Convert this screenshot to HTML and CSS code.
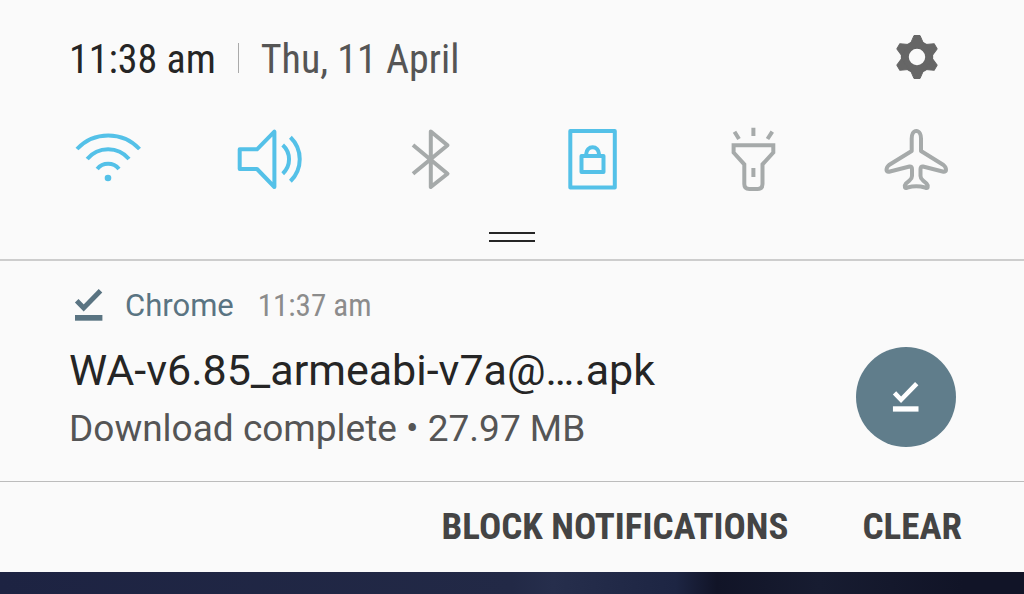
FILE: index.html
```html
<!DOCTYPE html>
<html lang="en">
<head>
<meta charset="utf-8">
<meta name="viewport" content="width=device-width, initial-scale=1">
<title>Notifications</title>
<link rel="stylesheet" href="styles.css">
</head>
<body>
<svg class="defs" aria-hidden="true">
  <symbol id="done" viewBox="0 0 30 33">
    <path d="M2.7 12.7 9.7 20 26.5 2.8" fill="none" stroke="currentColor" stroke-width="5"/>
    <path d="M1 27h27.4v5.7H1z" fill="currentColor"/>
  </symbol>
</svg>
<main class="shade">
  <section class="quick">
    <header class="status">
      <time class="clock">11:38 am</time>
      <span class="divider"></span>
      <time class="date">Thu, 11 April</time>
      <button class="icon-button settings" type="button" aria-label="Settings">
        <svg class="gear" viewBox="-23 -23 46 46">
          <circle r="12.2" fill="none" stroke="currentColor" stroke-width="8"/>
          <g fill="currentColor" stroke="currentColor" stroke-linejoin="round">
            <path id="tooth" d="M-3-21.5H3L6.500-13.500H-6.500z"/>
            <use href="#tooth" transform="rotate(60)"/>
            <use href="#tooth" transform="rotate(120)"/>
            <use href="#tooth" transform="rotate(180)"/>
            <use href="#tooth" transform="rotate(240)"/>
            <use href="#tooth" transform="rotate(300)"/>
          </g>
        </svg>
      </button>
    </header>
    <div class="toggles">
      <button class="icon-button on" type="button" aria-label="Wi-Fi" aria-pressed="true">
        <svg class="glyph" viewBox="0 0 70 70"><path d="M4 25A42.800 42.800 0 0 1 66.500 25M14.200 35A27.200 27.200 0 0 1 56 35M24.200 45A14 14 0 0 1 46 45"/><circle class="solid" cx="35" cy="54" r="3.3"/></svg>
      </button>
      <button class="icon-button on" type="button" aria-label="Sound" aria-pressed="true">
        <svg class="glyph" viewBox="0 0 70 70"><path d="M4.700 25.300H22L39.400 7.700V63L22 45H4.700zM47.700 21A19.400 19.400 0 0 1 47.700 49.700M55.400 13.300A30.600 30.600 0 0 1 55.400 57.300"/></svg>
      </button>
      <button class="icon-button" type="button" aria-label="Bluetooth" aria-pressed="false">
        <svg class="glyph" viewBox="0 0 70 70"><path d="M17 21 51.500 49.700 34.800 63V7.500L51.500 21.300 17 49.700"/></svg>
      </button>
      <button class="icon-button on" type="button" aria-label="Portrait lock" aria-pressed="true">
        <svg class="glyph" viewBox="0 0 70 70"><path d="M12.300 7H56.800V63.600H12.300zM23.500 32H45.500V48H23.500zM28.300 32V29.500a6.300 6.300 0 0 1 12.600 0V32"/></svg>
      </button>
      <button class="icon-button" type="button" aria-label="Torch" aria-pressed="false">
        <svg class="glyph" viewBox="0 0 70 70"><path class="sharp" d="M14.600 21.300H54.300V28.500L43.500 40.300V60q0 5-5 5H30.300q-5 0-5-5V40.300L14.600 28.500zM34.400 44V53M34.400 3.700V12M15.500 7.700 20 15M53.300 7.700 48.500 15"/></svg>
      </button>
      <button class="icon-button" type="button" aria-label="Flight mode" aria-pressed="false">
        <svg class="glyph" viewBox="0 0 70 70"><path d="M35.300 7C32 7 30.700 11 30.700 14.500V27L8 41Q5.500 43 5.500 46 5.800 48 8 47.700L28.500 42.500Q31 42.200 31 45V52Q31 54.500 28.500 56.500L25 59.500Q23.500 61 24 63.500 24.300 64.300 26.500 63.500 35.300 61 44 63.500 46.300 64.300 46.600 63.500 47 61 45.500 59.500L42 56.500Q39.500 54.500 39.500 52V45Q39.600 42.200 42 42.500L62.500 47.700Q64.800 48 65 46 65.100 43 62.500 41L40 27V14.500C40 11 38.600 7 35.300 7z"/></svg>
      </button>
    </div>
    <button class="handle" type="button" aria-label="Expand quick settings"></button>
  </section>
  <article class="notice">
    <div class="notice-body">
      <div class="source">
        <svg class="source-icon" aria-hidden="true"><use href="#done"/></svg>
        <span class="app">Chrome</span>
        <time class="when">11:37 am</time>
      </div>
      <h1 class="title">WA-v6.85_armeabi-v7a@….apk</h1>
      <p class="detail">Download complete • 27.97 MB</p>
    </div>
    <div class="badge"><svg class="badge-icon" aria-hidden="true"><use href="#done"/></svg></div>
  </article>
  <footer class="actions">
    <button class="action" type="button">BLOCK NOTIFICATIONS</button>
    <button class="action" type="button">CLEAR</button>
  </footer>
</main>
</body>
</html>
```
FILE: styles.css
```css
* {
  box-sizing: border-box;
}

body {
  margin: 0;
  min-height: 100vh;
  font-family: Roboto, "Liberation Sans", sans-serif;
  background: linear-gradient(90deg, #1d2342 0%, #222946 50%, #262e4c 54%, #1d2543 66%, #111427 70%, #171c31 80%, #111427 94%);
}

.defs {
  display: block;
  width: 0;
  height: 0;
}

.shade {
  background: #fafafa;
}

.quick {
  display: flex;
  flex-direction: column;
  padding: 34px 73px 0;
  border-bottom: 2px solid #cdcdcd;
}

.status {
  display: flex;
  align-items: center;
  height: 52px;
  margin-left: -4px;
  padding-right: 11px;
  font-family: "Roboto Condensed", Roboto, sans-serif;
  font-size: 40px;
  line-height: 52px;
  white-space: nowrap;
}

.clock {
  color: #252525;
}

.divider {
  width: 1px;
  height: 30px;
  margin: 0 22px 4px;
  background: #aaa;
}

.date {
  color: #555;
}

.icon-button {
  display: block;
  padding: 0;
  border: 0;
  background: none;
  color: #a6aaaa;
}

.icon-button.on {
  color: #54c1e8;
}

.icon-button.settings {
  margin-bottom: 6px;
  margin-left: auto;
  color: #666;
}

.gear {
  display: block;
  width: 46px;
  height: 46px;
}

.toggles {
  display: flex;
  justify-content: space-between;
  margin-top: 38px;
}

.glyph {
  display: block;
  width: 70px;
  height: 70px;
  fill: none;
  stroke: currentColor;
  stroke-width: 4;
  stroke-linejoin: round;
}

.glyph .sharp {
  stroke-linejoin: miter;
}

.glyph .solid {
  fill: currentColor;
  stroke: none;
}

.handle {
  align-self: center;
  width: 46px;
  height: 10px;
  margin: 38px 0 17px;
  padding: 0;
  border: solid #252525;
  border-width: 2px 0;
  background: none;
}

.notice {
  display: flex;
  align-items: center;
  justify-content: space-between;
  padding: 25px 68px 28px 69px;
  border-bottom: 1px solid #bcbcbc;
}

.source {
  display: flex;
  align-items: center;
  height: 40px;
  padding-left: 5px;
  font-size: 31px;
  line-height: 40px;
}

.source-icon {
  width: 30px;
  height: 33px;
  margin-bottom: 4px;
  color: #5a7482;
}

.app {
  margin-left: 21px;
  color: #5a7482;
}

.when {
  margin-left: 24px;
  font-family: "Roboto Condensed", Roboto, sans-serif;
  color: #8c8c8c;
}

.title {
  margin: 16px 0 0;
  font-size: 43px;
  font-weight: 400;
  line-height: 56px;
  color: #252525;
}

.detail {
  margin: 7px 0 0;
  font-size: 37px;
  line-height: 48px;
  color: #555;
}

.badge {
  display: grid;
  place-items: center;
  flex: none;
  width: 100px;
  height: 100px;
  margin-top: 54px;
  border-radius: 50%;
  background: #607d8b;
  color: #fff;
}

.badge-icon {
  width: 28px;
  height: 31px;
}

.actions {
  display: flex;
  justify-content: flex-end;
  gap: 74px;
  padding: 20px 62px;
}

.action {
  padding: 0;
  border: 0;
  background: none;
  font-family: "Roboto Condensed", Roboto, sans-serif;
  font-size: 37px;
  font-weight: 700;
  line-height: 50px;
  color: #444;
  white-space: nowrap;
}
```
